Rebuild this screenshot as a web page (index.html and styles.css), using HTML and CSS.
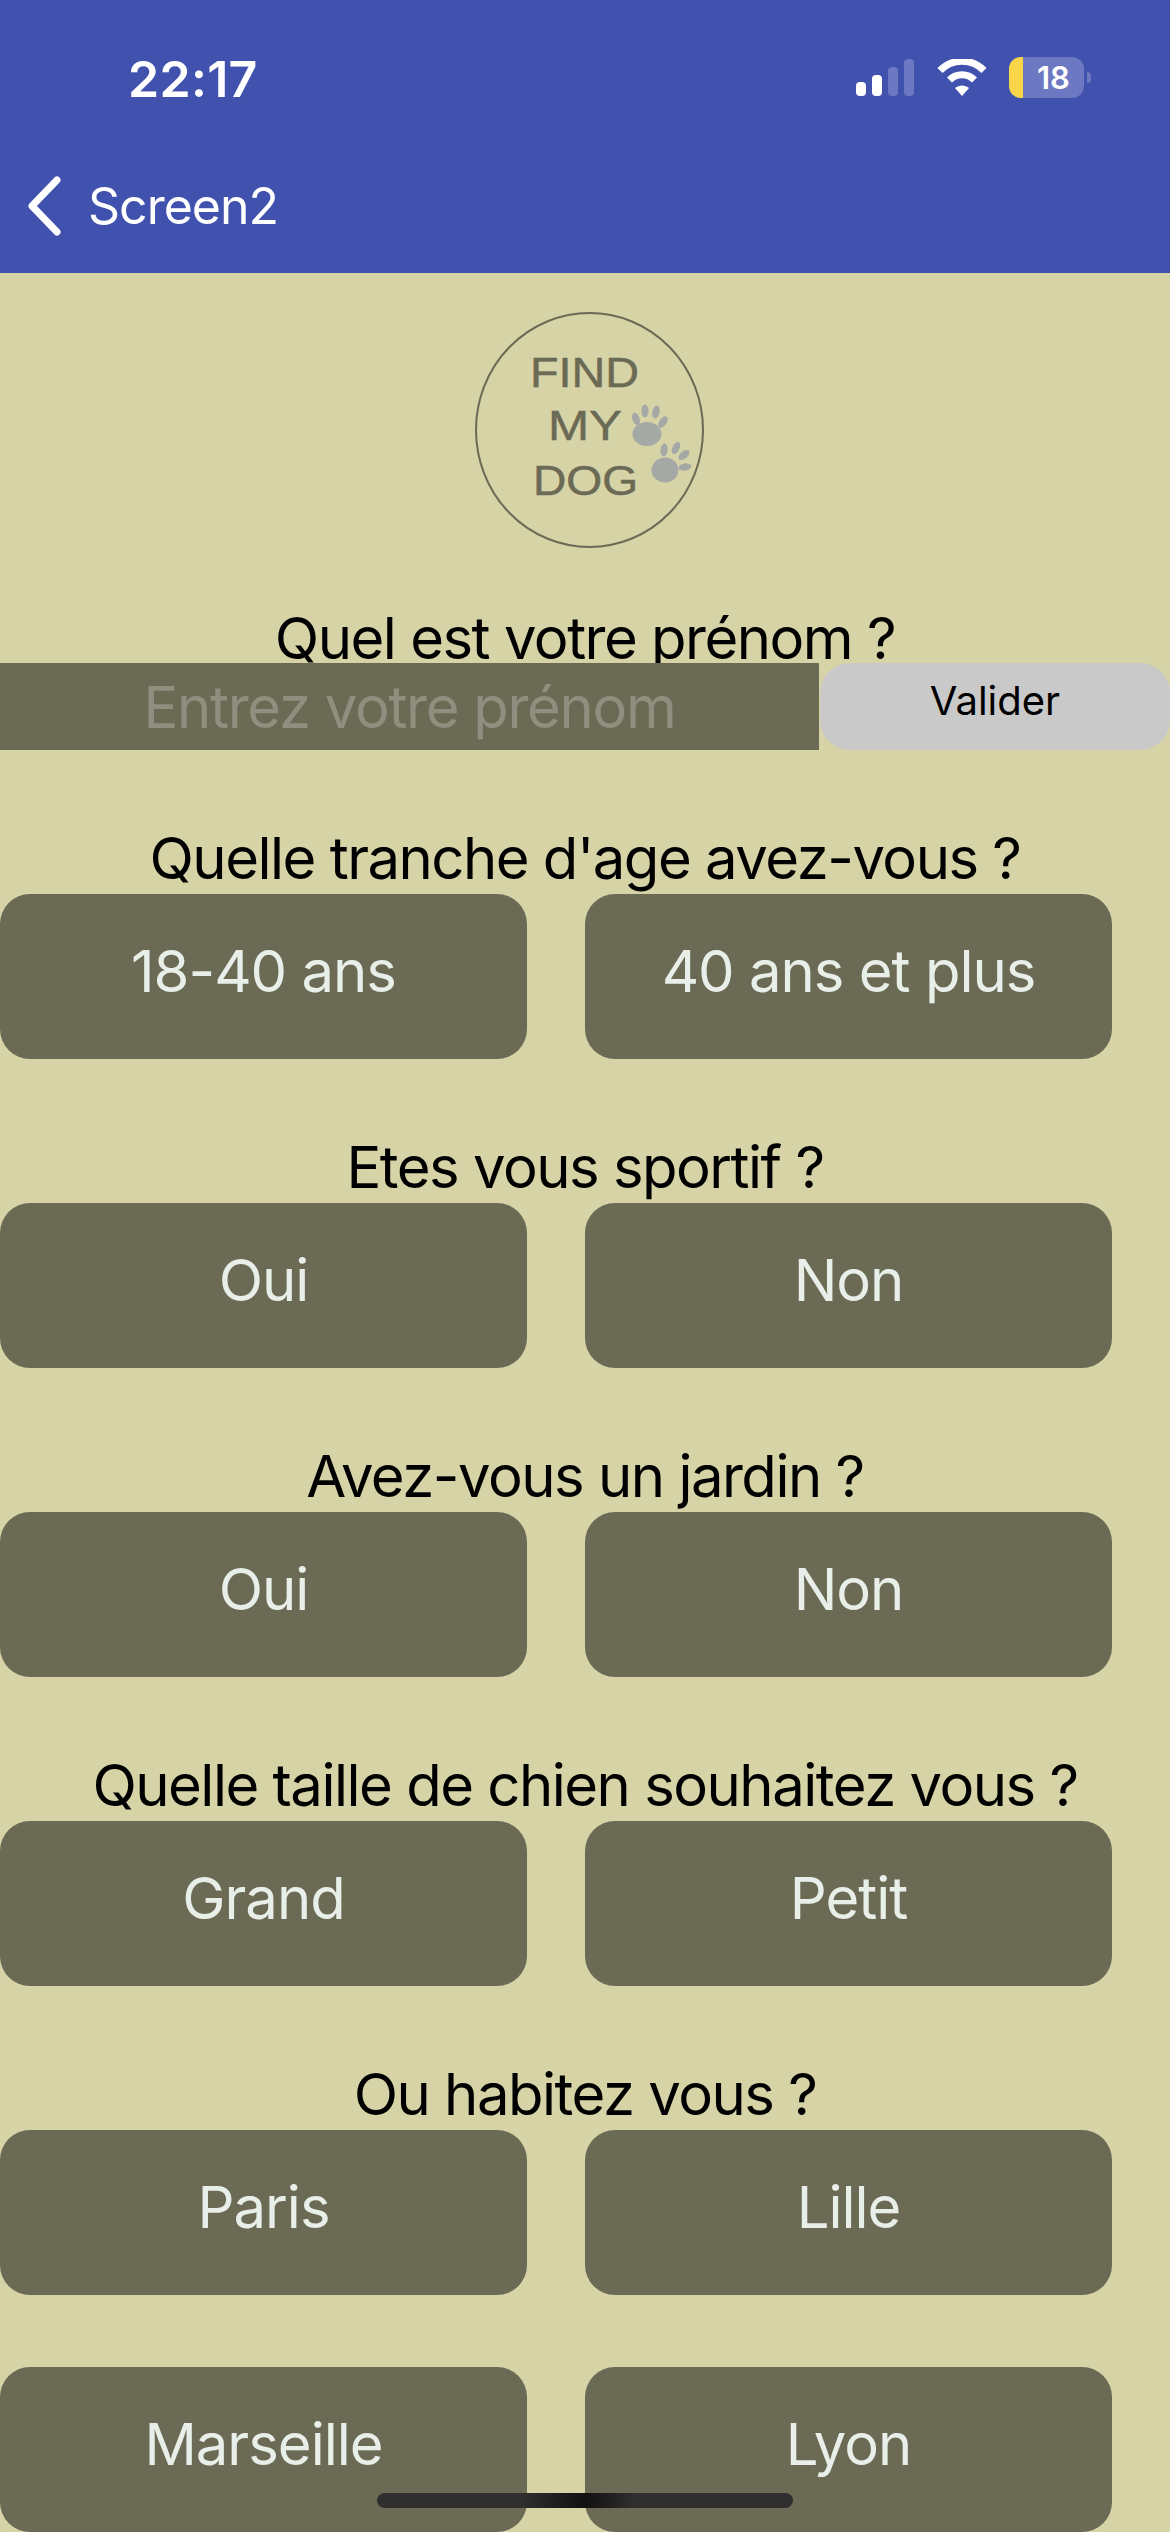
FILE: index.html
```html
<!DOCTYPE html>
<html lang="fr">

<head>
    <meta charset="UTF-8">
    <title>Screen2</title>
    <link rel="stylesheet" href="styles.css">
</head>

<body>

    <header class="topbar">
        <div class="status">
            <span class="time">22:17</span>
            <div class="status-icons">
                <svg class="signal" width="58" height="37" viewBox="0 0 58 37">
                    <rect x="0" y="23" width="10" height="14" rx="4" fill="#fff" />
                    <rect x="16" y="16" width="10" height="21" rx="4" fill="#fff" />
                    <rect x="32" y="8" width="10" height="29" rx="4" fill="#6c78c2" />
                    <rect x="48" y="0" width="10" height="37" rx="4" fill="#6c78c2" />
                </svg>
                <svg class="wifi" width="50" height="37" viewBox="0 0 50 37">
                    <path d="M3 11.5C15 -1 35 -1 47 11.5" fill="none" stroke="#fff" stroke-width="7" />
                    <path d="M12.5 21C19.5 14 30.5 14 37.5 21" fill="none" stroke="#fff" stroke-width="7" />
                    <path d="M18 29C22 25.5 28 25.5 32 29L25 37Z" fill="#fff" />
                </svg>
                <div class="battery">
                    <span class="battery-level"></span>
                    <span class="battery-text">18</span>
                </div>
                <span class="battery-nub"></span>
            </div>
        </div>
        <nav class="nav">
            <svg class="back" width="36" height="60" viewBox="0 0 36 60">
                <path d="M31 4L6 30L31 56" fill="none" stroke="#fff" stroke-width="7" stroke-linecap="round" stroke-linejoin="round" />
            </svg>
            <span class="nav-title">Screen2</span>
        </nav>
    </header>

    <main>
        <div class="logo">
            <svg width="229" height="236" viewBox="0 0 229 236">
                <ellipse cx="114.5" cy="118" rx="113.5" ry="117" fill="none" stroke="#6b6a55" stroke-width="2" />
                <g class="logo-text">
                    <text x="55" y="75" textLength="109" lengthAdjust="spacingAndGlyphs">FIND</text>
                    <text x="73" y="128" textLength="74" lengthAdjust="spacingAndGlyphs">MY</text>
                    <text x="58" y="183" textLength="105" lengthAdjust="spacingAndGlyphs">DOG</text>
                </g>
                <g class="paw">
                    <ellipse cx="172" cy="122" rx="14.5" ry="12" />
                    <ellipse cx="161" cy="107" rx="3.6" ry="6.5" transform="rotate(-20 161 107)" />
                    <ellipse cx="170" cy="99" rx="3.6" ry="6.5" />
                    <ellipse cx="181" cy="100" rx="3.6" ry="6.5" transform="rotate(12 181 100)" />
                    <ellipse cx="188" cy="110" rx="3.6" ry="6.5" transform="rotate(35 188 110)" />
                </g>
                <g class="paw">
                    <ellipse cx="190" cy="158" rx="13.5" ry="12.5" />
                    <ellipse cx="189" cy="138" rx="3.6" ry="6.5" transform="rotate(5 189 138)" />
                    <ellipse cx="201" cy="136" rx="3.6" ry="6.5" transform="rotate(25 201 136)" />
                    <ellipse cx="209" cy="143" rx="3.6" ry="6.5" transform="rotate(50 209 143)" />
                    <ellipse cx="210" cy="155" rx="3.6" ry="6.5" transform="rotate(80 210 155)" />
                </g>
            </svg>
        </div>

        <h2 class="name-title">Quel est votre prénom ?</h2>
        <div class="name-row">
            <input class="name-input" type="text" placeholder="Entrez votre prénom">
            <button class="validate">Valider</button>
        </div>

        <h2 class="title">Quelle tranche d'age avez-vous ?</h2>
        <div class="choices">
            <button class="choice">18-40 ans</button>
            <button class="choice">40 ans et plus</button>
        </div>

        <h2 class="title">Etes vous sportif ?</h2>
        <div class="choices">
            <button class="choice">Oui</button>
            <button class="choice">Non</button>
        </div>

        <h2 class="title">Avez-vous un jardin ?</h2>
        <div class="choices">
            <button class="choice">Oui</button>
            <button class="choice">Non</button>
        </div>

        <h2 class="title">Quelle taille de chien souhaitez vous ?</h2>
        <div class="choices">
            <button class="choice">Grand</button>
            <button class="choice">Petit</button>
        </div>

        <h2 class="title">Ou habitez vous ?</h2>
        <div class="choices">
            <button class="choice">Paris</button>
            <button class="choice">Lille</button>
        </div>

        <div class="choices last">
            <button class="choice">Marseille</button>
            <button class="choice">Lyon</button>
        </div>
    </main>

    <div class="home-bar"></div>

</body></html>
```

FILE: styles.css
```css
body {
    margin: 0;
    height: 2532px;
    overflow: hidden;
    position: relative;
    background-color: #d6d3a7;
    font-family: Inter, "Liberation Sans", sans-serif;
}

/* top */

.topbar {
    height: 273px;
    background-color: #4152ae;
    color: white;
}

.status {
    display: flex;
    justify-content: space-between;
    height: 176px;
}

.time {
    margin: 49px 0 0 128px;
    font-size: 50px;
    line-height: 60px;
    font-weight: 600;
    letter-spacing: 0.3px;
}

.status-icons {
    display: flex;
    align-items: flex-start;
    margin: 57px 79px 0 0;
}

.signal {
    margin: 2px 23px 0 0;
}

.wifi {
    margin: 2px 22px 0 0;
}

.battery {
    width: 75px;
    height: 41px;
    border-radius: 12px;
    background-color: #6c78c2;
    overflow: hidden;
    display: flex;
}

.battery-level {
    width: 14px;
    background-color: #f9d648;
}

.battery-text {
    flex: 1;
    text-align: center;
    font-size: 31px;
    line-height: 41px;
    font-weight: 600;
}

.battery-nub {
    width: 4px;
    height: 11px;
    margin: 15px 0 0 3px;
    border-radius: 0 6px 6px 0;
    background-color: #6c78c2;
}

.nav {
    display: flex;
    align-items: center;
    height: 60px;
    padding-left: 26px;
}

.back {
    margin-right: 26px;
}

.nav-title {
    font-size: 50px;
    letter-spacing: -1px;
}

/* logo */

.logo {
    display: flex;
    justify-content: center;
    height: 236px;
    margin-top: 39px;
    padding-left: 9px;
}

.logo-text {
    font-family: "Liberation Sans", sans-serif;
    font-size: 43px;
    fill: #6b6a55;
    stroke: #6b6a55;
    stroke-width: 0.5px;
}

.paw {
    fill: #a5a9a6;
}

/* questions */

.name-title,
.title {
    height: 68px;
    font-size: 58px;
    line-height: 68px;
    font-weight: 400;
    text-align: center;
    color: black;
    white-space: nowrap;
    letter-spacing: -1.5px;
}

.name-title {
    margin: 56px 0 -9px;
}

.title {
    margin: 74px 0 2px;
}

.name-row {
    position: relative;
    display: flex;
    gap: 1px;
    height: 87px;
}

.name-input {
    box-sizing: border-box;
    width: 819px;
    height: 87px;
    border: 0;
    border-radius: 0;
    padding: 0;
    background-color: #6b6a55;
    font-family: Inter, "Liberation Sans", sans-serif;
    font-size: 58px;
    letter-spacing: -1.3px;
    text-align: center;
    color: white;
}

.name-input::placeholder {
    color: #8f8f80;
    opacity: 1;
}

.validate {
    width: 350px;
    height: 87px;
    border: 0;
    border-radius: 30px;
    padding: 0 0 12px;
    background-color: #c9c9c9;
    font-family: Inter, "Liberation Sans", sans-serif;
    font-size: 40px;
    color: black;
}

.choices {
    display: grid;
    grid-template-columns: 527px 527px;
    gap: 58px;
}

.choices.last {
    margin-top: 72px;
}

.choice {
    height: 165px;
    border: 0;
    border-radius: 30px;
    padding: 0 0 12px;
    background-color: #6b6a55;
    font-family: Inter, "Liberation Sans", sans-serif;
    font-size: 58px;
    letter-spacing: -1px;
    color: #e8eee8;
}

.home-bar {
    position: absolute;
    left: 377px;
    top: 2493px;
    width: 416px;
    height: 15px;
    border-radius: 8px;
    background: linear-gradient(90deg, #2f2f2f 0, #2f2f2f 35%, #111 50%, #2f2f2f 62%, #2f2f2f 100%);
}
```
